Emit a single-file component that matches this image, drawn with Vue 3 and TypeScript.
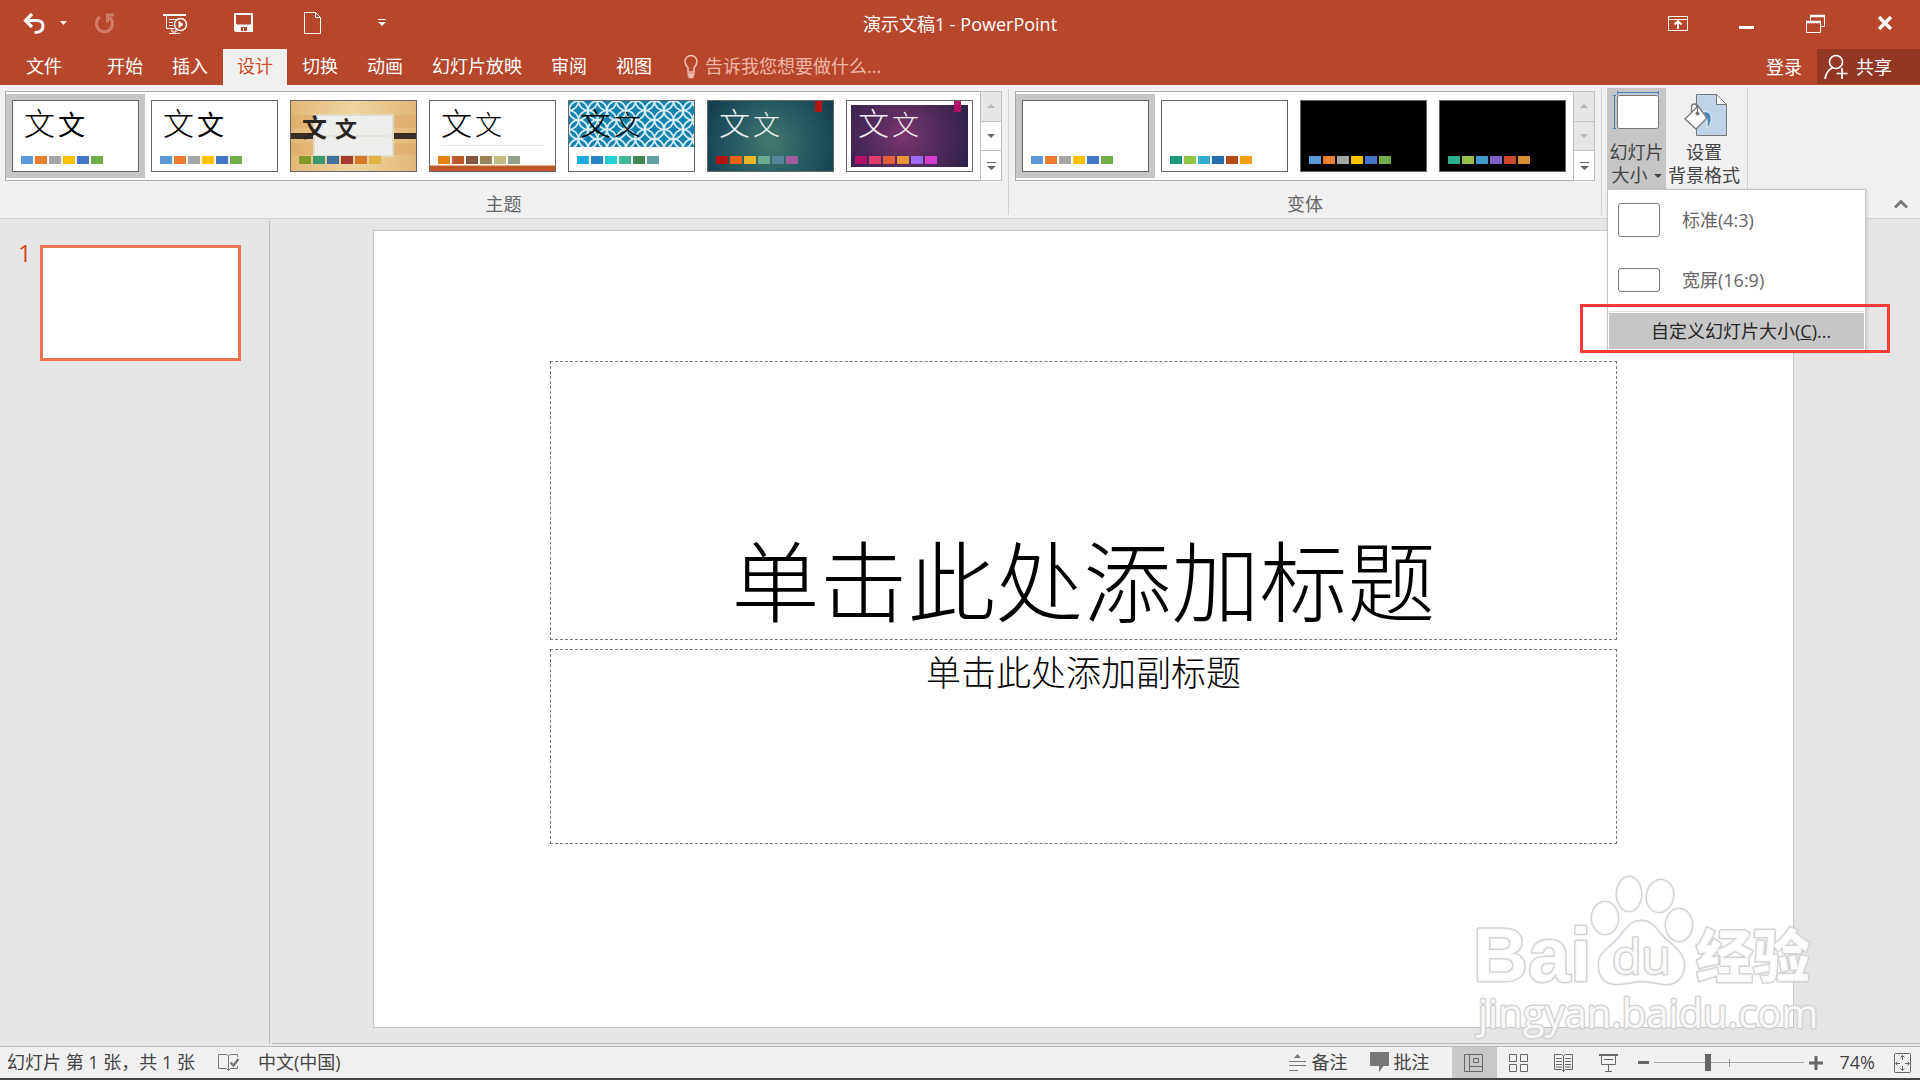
<script setup lang="ts">
import { ref } from 'vue'

interface Theme {
  name: string
  kind: string
  sample: boolean
  colors: string[]
}

const office = ['#5b9bd5', '#ed7d31', '#a5a5a5', '#ffc000', '#4472c4', '#70ad47']

const themes: Theme[] = [
  { name: 'Office 主题', kind: 'plain', sample: true, colors: office },
  { name: 'Office 主题 2', kind: 'plain', sample: true, colors: office },
  { name: '木材纹理', kind: 'wood', sample: true, colors: ['#83992a', '#3c9770', '#44709d', '#a23c33', '#d97828', '#deb340'] },
  { name: '回顾', kind: 'retro', sample: true, colors: ['#e48312', '#bd582c', '#865640', '#9b8357', '#c2bc80', '#94a088'] },
  { name: '积分', kind: 'rings', sample: true, colors: ['#1cade4', '#2683c6', '#27ced7', '#42ba97', '#3e8853', '#62a39f'] },
  { name: '离子', kind: 'ion', sample: true, colors: ['#b01513', '#ea6312', '#e6b729', '#6aac90', '#54849a', '#9e5e9b'] },
  { name: '离子会议室', kind: 'board', sample: true, colors: ['#b31166', '#e33d6f', '#e45f3c', '#e9943a', '#9b6bf2', '#d53dd0'] },
]

const variants: Theme[] = [
  { name: '变体 1', kind: 'plain', sample: false, colors: office },
  { name: '变体 2', kind: 'plain', sample: false, colors: ['#1b9b77', '#8cc541', '#36afce', '#1d6fa9', '#b64919', '#f39c16'] },
  { name: '变体 3', kind: 'black', sample: false, colors: office },
  { name: '变体 4', kind: 'black', sample: false, colors: ['#28b08d', '#97bf4b', '#3e9bcd', '#7e5cc5', '#cd472a', '#d98c2e'] },
]

const tabs = ['开始', '插入', '设计', '切换', '动画', '幻灯片放映', '审阅', '视图']
const activeTab = ref('设计')
const activeTheme = ref(0)
const activeVariant = ref(0)
const query = ref('')
const zoom = ref(36)
</script>

<template>
  <div class="app">
    <header class="titlebar">
      <div class="quick">
        <button class="undo" aria-label="撤消">
          <svg width="46" height="24" viewBox="0 0 46 24"><path d="M3 9.500H14.500Q21 9.500 21 15Q21 21.500 12.500 21.500" fill="none" stroke="#f4f4f4" stroke-width="3" /><path d="M10 3L3.500 9.500L10 16" fill="none" stroke="#f4f4f4" stroke-width="3.200" /><path d="M38 10h7l-3.500 4z" fill="#f4f4f4" /></svg>
        </button>
        <button class="redo" aria-label="重复" disabled>
          <svg width="22" height="24" viewBox="0 0 22 24"><path d="M6 6A8 8 0 1 0 15.500 6.500M20 4h-6.500v7.500" fill="none" stroke="#cf7d69" stroke-width="3" /></svg>
        </button>
        <button class="show" aria-label="从头开始">
          <svg width="26" height="24" viewBox="0 0 26 24" fill="none" stroke="#fff"><path d="M1 4h23" stroke-width="2" /><path d="M4.500 5v12.500h8M7 8.500h7M7 11.500h4M7 14.500h4M10 18v3h4v-3M7 22.500h11" /><circle cx="18.500" cy="13.500" r="6" stroke-width="1.500" /><path d="M17 10.500l4 3l-4 3z" fill="#fff" /></svg>
        </button>
        <button class="save" aria-label="保存">
          <svg width="20" height="22" viewBox="0 0 20 22"><path fill="#f6f6f6" fill-rule="evenodd" d="M0 1h19v19H1.500L0 18.500zM2 3v8.500l1 1h13l1-1V3zM5 15v4h2v-4zm0 0h8v4h-3v-3H9v3H5z" /></svg>
        </button>
        <button class="new" aria-label="新建">
          <svg width="18" height="24" viewBox="0 0 18 24" fill="none" stroke="#fff"><path d="M.5 1.500h11l5 5v16H.5z" /><path d="M11.500 1.500v5h5" /></svg>
        </button>
        <button aria-label="自定义快速访问工具栏">
          <svg width="8" height="10" viewBox="0 0 8 10"><path d="M0 1h8v1H0zM0 4h8L4 8z" fill="#fff" /></svg>
        </button>
      </div>
      <h1 class="doc">演示文稿1 - PowerPoint</h1>
      <div class="window">
        <button aria-label="功能区显示选项">
          <svg width="20" height="20" viewBox="0 0 20 20" fill="none" stroke="#fff"><path d="M.5 2.500h19v14H.5zM.5 5.500h19" /><path d="M10 15V7.500M6.500 10.500L10 7l3.500 3.500" stroke-width="1.800" /></svg>
        </button>
        <button aria-label="最小化"><svg width="16" height="20" viewBox="0 0 16 20"><path d="M0 12h15v3H0z" fill="#fff" /></svg></button>
        <button aria-label="向下还原">
          <svg width="20" height="20" viewBox="0 0 20 20" fill="none" stroke="#fff"><path d="M4.500 7V1.500h14v11H15M.5 7.500h14v11H.5z" /><path d="M4 2h15M0 8h15" stroke-width="2.500" /></svg>
        </button>
        <button aria-label="关闭"><svg width="16" height="20" viewBox="0 0 16 20"><path d="M2 3l12 12M14 3L2 15" stroke="#fff" stroke-width="3.500" /></svg></button>
      </div>
    </header>

    <nav class="tabs" aria-label="功能区">
      <button class="tab file">文件</button>
      <button v-for="t in tabs" :key="t" class="tab" :class="{ active: t === activeTab }" @click="activeTab = t">{{ t }}</button>
      <label class="tell">
        <svg width="16" height="28" viewBox="0 0 16 28" fill="none" stroke="#eec0b3" stroke-width="1.600"><path d="M5 19v-4Q2 11.500 2 8.500a6 6 0 0 1 12 0Q14 11.500 11 15v4z" /><path d="M4.500 21.500h7M5.500 24h5" stroke-width="2.400" /></svg>
        <input v-model="query" type="text" placeholder="告诉我您想要做什么..." aria-label="告诉我您想要做什么">
      </label>
      <button class="login">登录</button>
      <button class="share">
        <svg width="24" height="26" viewBox="0 0 24 26" fill="none" stroke="#fff" stroke-width="1.700"><circle cx="12" cy="8" r="6.500" /><path d="M1 25Q2.500 16 8.500 14M18 14v11M12.500 19.500h11" /></svg>
        共享
      </button>
    </nav>

    <section class="ribbon" aria-label="设计">
      <svg class="defs" width="0" height="0" aria-hidden="true">
        <defs>
          <pattern id="rings" width="19" height="19" patternUnits="userSpaceOnUse">
            <rect width="19" height="19" fill="#1482b0" />
            <g fill="none" stroke="#d9eef5" stroke-width="1.700"><circle cx="9.500" cy="9.500" r="9.500" /><circle r="9.500" /><circle cx="19" r="9.500" /><circle cy="19" r="9.500" /><circle cx="19" cy="19" r="9.500" /></g>
          </pattern>
        </defs>
      </svg>

      <div class="group">
        <div class="gallery">
          <button v-for="(t, i) in themes" :key="t.name" class="cell" :class="{ chosen: i === activeTheme }" :aria-label="t.name" @click="activeTheme = i">
            <span class="thumb" :class="t.kind">
              <svg v-if="t.kind === 'rings'" class="art" viewBox="0 0 125 70"><rect width="125" height="46" fill="url(#rings)" /></svg>
              <svg v-else-if="t.kind === 'wood'" class="art" viewBox="0 0 125 70"><path d="M0 14h125v13H0zM0 42h125v12H0z" fill="#dd9d58" opacity=".35" /><path d="M0 32h125v6H0z" fill="#3a2d24" /><path d="M23 14h79v41H23z" fill="#eeeeec" stroke="#dcdcc8" stroke-width="2" /><path d="M24 35h74" stroke="#dcdccb" /></svg>
              <svg v-else-if="t.kind === 'retro'" class="art" viewBox="0 0 125 70"><path d="M11 44.500h103" stroke="#e8e8e8" /><path d="M0 65h125v5H0z" fill="#bd582c" /><path d="M0 64.500h125" stroke="#edb37f" /></svg>
              <svg v-else-if="t.kind === 'ion' || t.kind === 'board'" class="art" viewBox="0 0 125 70"><path d="M107 0h7v11h-7z" :fill="t.colors[0]" /></svg>
              <span class="sample"><span class="major">文</span><span class="minor">文</span></span>
              <span class="swatches"><i v-for="c in t.colors" :key="c" :style="{ background: c }" /></span>
            </span>
          </button>
          <div class="scroll">
            <button disabled aria-label="上一行"><svg width="8" height="4"><path d="M0 4h8L4 0z" fill="#b5b5b5" /></svg></button>
            <button aria-label="下一行"><svg width="8" height="4"><path d="M0 0h8L4 4z" fill="#666" /></svg></button>
            <button aria-label="其他主题"><svg width="9" height="8"><path d="M0 0h9v1H0zM0 4h9L4.500 8z" fill="#666" /></svg></button>
          </div>
        </div>
        <div class="caption">主题</div>
      </div>

      <div class="group">
        <div class="gallery">
          <button v-for="(t, i) in variants" :key="t.name" class="cell" :class="{ chosen: i === activeVariant }" :aria-label="t.name" @click="activeVariant = i">
            <span class="thumb" :class="t.kind">
              <span class="swatches"><i v-for="c in t.colors" :key="c" :style="{ background: c }" /></span>
            </span>
          </button>
          <div class="scroll">
            <button disabled aria-label="上一行"><svg width="8" height="4"><path d="M0 4h8L4 0z" fill="#b5b5b5" /></svg></button>
            <button disabled aria-label="下一行"><svg width="8" height="4"><path d="M0 0h8L4 4z" fill="#b5b5b5" /></svg></button>
            <button aria-label="其他变体"><svg width="9" height="8"><path d="M0 0h9v1H0zM0 4h9L4.500 8z" fill="#666" /></svg></button>
          </div>
        </div>
        <div class="caption">变体</div>
      </div>

      <div class="tools">
        <div class="size">
          <button class="tool open" aria-haspopup="menu" aria-expanded="true">
            <svg width="50" height="50" viewBox="0 0 50 50" fill="none"><rect x="5.500" y="4.500" width="41" height="33" rx="2" fill="#fff" stroke="#777" /><path d="M5 1.500h42M5.500 0v4M46.500 0v4M2.500 4v34M1 4.500h3M1 37.500h3" stroke="#4682be" /></svg>
            <span>幻灯片</span>
            <span>大小<svg width="8" height="4"><path d="M0 0h8L4 4z" fill="#444" /></svg></span>
          </button>
          <div class="menu" role="menu">
            <button class="item" role="menuitem"><span class="shape standard" />标准(4:3)</button>
            <button class="item" role="menuitem"><span class="shape wide" />宽屏(16:9)</button>
            <div class="divider" />
            <button class="item custom" role="menuitem">自定义幻灯片大小(<u>C</u>)...</button>
            <div class="highlight" />
          </div>
        </div>
        <button class="tool">
          <svg width="50" height="50" viewBox="0 0 50 50"><path d="M17.500 3.500h20l10 10v31h-30z" fill="#c1d3e8" stroke="#777" /><path d="M37.500 3.500v10h10z" fill="#fff" stroke="#777" /><path d="M24 21Q33 19 32 30Q31 35 28 37Q29 29 27 26z" fill="#4682be" stroke="#fff" stroke-width=".8" /><path d="M6 28L19 15L28 27L17 38z" fill="#fff" stroke="#777" stroke-width="1.300" /><path d="M12.500 22v-6q0-3 3-3t3 3v6" fill="none" stroke="#777" stroke-width="1.300" /><circle cx="18.500" cy="22.500" r="2" fill="#777" /></svg>
          <span>设置</span>
          <span>背景格式</span>
        </button>
      </div>
      <button class="collapse" aria-label="折叠功能区"><svg width="14" height="10" viewBox="0 0 14 10"><path d="M1 8.500L7 2.500l6 6" fill="none" stroke="#777" stroke-width="3" /></svg></button>
    </section>

    <main class="work">
      <aside class="slides">
        <span class="num">1</span>
        <button class="preview" aria-label="幻灯片 1" />
      </aside>
      <div class="stage">
        <article class="slide">
          <div class="holder title">单击此处添加标题</div>
          <div class="holder sub">单击此处添加副标题</div>
        </article>
        <svg class="watermark" width="352" height="180" viewBox="0 0 352 180" aria-hidden="true">
          <g fill="#fff" fill-opacity=".85" stroke="#d4d4d4" stroke-width="3" paint-order="stroke" stroke-linejoin="round">
            <text class="wm-brand" x="3" y="111">Bai</text>
            <ellipse cx="135" cy="48" rx="13" ry="16" />
            <ellipse cx="159" cy="24" rx="12" ry="17" />
            <ellipse cx="190" cy="26" rx="13" ry="16" transform="rotate(12 190 26)" />
            <ellipse cx="209" cy="55" rx="13" ry="16" />
            <path d="M171 51C183 51 186 60 194 68C204 77 215 84 214 97C213 108 205 115 194 114C183 112 178 111 171 111C163 111 158 114 145 114C134 113 129 106 129 95C129 82 139 79 148 69C156 60 160 51 171 51Z" />
            <text class="wm-du" x="142" y="104">du</text>
            <text class="wm-cn" x="226" y="107">经验</text>
            <text class="wm-url" x="8" y="158">jingyan.baidu.com</text>
          </g>
        </svg>
      </div>
    </main>

    <footer class="status">
      <span>幻灯片 第 1 张，共 1 张</span>
      <button class="spell" aria-label="拼写检查">
        <svg width="22" height="20" viewBox="0 0 22 20" fill="none" stroke="#777"><path d="M10.500 18.500L8.500 16.500H.5v-14H8.500L10.500 4V18.500L12.500 16.500H19.500V14M10.500 4L12.500 2.500H19.500V5" /><path d="M12.500 10.500l3 3L20.500 7" stroke-width="2.400" /></svg>
      </button>
      <span>中文(中国)</span>
      <div class="right">
        <button class="pane notes"><svg width="18" height="20" viewBox="0 0 18 20"><path d="M5 6h7L8.500 2z" fill="#777" /><path d="M0 9.500h17M0 13.500h17M0 18.500h9" stroke="#777" /></svg>备注</button>
        <button class="pane"><svg width="19" height="20" viewBox="0 0 19 20"><path d="M0 0h19v14H13.500L9 20V14H0z" fill="#777" /></svg>批注</button>
        <div class="views">
          <button class="on" aria-label="普通视图"><svg width="20" height="20" viewBox="0 0 20 20" fill="none" stroke="#666"><path d="M.5 1.500h18v17H.5zM5.500 1.500v17M5.500 13.500h13M9.500 5.500h5v4h-5z" /></svg></button>
          <button aria-label="幻灯片浏览"><svg width="20" height="20" viewBox="0 0 20 20" fill="none" stroke="#666"><path d="M.5 1.500h7v7h-7zM11.500 1.500h7v7h-7zM.5 11.500h7v7h-7zM11.500 11.500h7v7h-7z" /></svg></button>
          <button aria-label="阅读视图"><svg width="20" height="20" viewBox="0 0 20 20" fill="none" stroke="#666"><path d="M9.500 3v16M9.500 3L7.500 1.500H.5v15h7l2 1.500l2-1.500h7v-15h-7zM2 5.500h6M2 8.500h6M2 11.500h6M2 14h6M11 5.500h6M11 8.500h6M11 11.500h6M11 14h6" /></svg></button>
          <button aria-label="幻灯片放映"><svg width="20" height="20" viewBox="0 0 20 20" fill="none" stroke="#666"><path d="M0 2h19" stroke-width="2" /><path d="M2.500 3v8.500h14V3M5 6.500h9M9.500 11.500v7M6 18.500h7" /></svg></button>
        </div>
        <button class="step" aria-label="缩小"><svg width="12" height="14"><path d="M0 5h11v3H0z" fill="#666" /></svg></button>
        <input v-model.number="zoom" class="range" type="range" min="0" max="100" aria-label="显示比例">
        <button class="step plus" aria-label="放大"><svg width="14" height="14"><path d="M0 5.500h5.500V0h3v5.500H14v3H8.500V14h-3V8.500H0z" fill="#666" /></svg></button>
        <button class="percent">74%</button>
        <button class="fit" aria-label="使幻灯片适应当前窗口"><svg width="18" height="22" viewBox="0 0 18 22" fill="none" stroke="#666"><rect x=".5" y="1.500" width="16" height="19" rx="1" /><path d="M8.500 3v5M6.500 5.500l2-2l2 2M8.500 19v-5M6.500 16.500l2 2l2-2M2 11.500h4M3.500 9.500l-2 2l2 2M15 11.500h-4M13.500 9.500l2 2l-2 2" /></svg></button>
      </div>
    </footer>
  </div>
</template>

<style>
body {
  background: #e6e6e6;
}
</style>

<style scoped>
.app {
  box-sizing: border-box;
  display: flex;
  flex-direction: column;
  min-height: 100vh;
  border-bottom: 2px solid #444;
  background: #e6e6e6;
  color: #444;
  font: 18px/24px "Open Sans", "Noto Sans CJK SC", sans-serif;
}
button {
  padding: 0;
  border: 0;
  background: none;
  color: inherit;
  font: inherit;
}
svg {
  display: block;
  flex: none;
}

.titlebar {
  display: grid;
  grid-template-columns: 1fr auto 1fr;
  align-items: center;
  height: 49px;
  padding-bottom: 2px;
  box-sizing: border-box;
  background: #b7472a;
  color: #fff;
}
.quick {
  display: flex;
  align-items: center;
  padding: 0 0 2px 22px;
}
.undo { margin-right: 26px; }
.redo { margin-right: 46px; }
.show { margin-right: 46px; }
.save { margin-right: 50px; }
.new { margin-right: 56px; }
.doc {
  margin: 0;
  font-size: 18px;
  font-weight: 400;
}
.window {
  display: flex;
  justify-content: flex-end;
  gap: 51px;
  padding-right: 27px;
}

.tabs {
  display: flex;
  gap: 1px;
  height: 36px;
  background: #b7472a;
  color: #fff;
}
.tab {
  padding: 0 14px 2px;
}
.file {
  padding: 0 30px 2px 26px;
}
.active {
  background: #f1f1f1;
  color: #d24726;
}
.tell {
  display: flex;
  flex: 1;
  align-items: center;
  gap: 6px;
  padding-left: 16px;
}
.tell input {
  flex: 1;
  min-width: 0;
  padding: 0 0 2px;
  border: 0;
  outline: 0;
  background: none;
  color: #fff;
  font: inherit;
}
.tell input::placeholder {
  color: #eeb8a8;
  opacity: 1;
}
.login {
  margin-right: 14px;
}
.share {
  display: flex;
  align-items: center;
  gap: 8px;
  height: 35px;
  padding: 0 28px 0 7px;
  background: #923822;
}

.ribbon {
  display: flex;
  height: 133px;
  border-bottom: 1px solid #d2d2d2;
  background: #f1f1f1;
}
.defs {
  position: absolute;
}
.group {
  display: flex;
  flex-direction: column;
  margin: 4px 0 3px;
  padding: 2px 6px 0 5px;
  border-right: 1px solid #d2d2d2;
}
.group + .group {
  padding-left: 6px;
}
.gallery {
  display: flex;
  flex: none;
  box-sizing: border-box;
  height: 90px;
  border: 1px solid #ababab;
  border-right: 0;
  background: #fff;
}
.cell {
  width: 139px;
  height: 84px;
  margin-top: 2px;
  padding: 6px;
}
.chosen {
  background: #c6c6c6;
}
.thumb {
  position: relative;
  display: flex;
  flex-direction: column;
  justify-content: flex-end;
  box-sizing: border-box;
  height: 72px;
  padding: 0 8px 7px;
  border: 1px solid #666;
  background: #fff;
  color: #000;
}
.art {
  position: absolute;
  inset: 0;
  width: 100%;
  height: 100%;
}
.wood {
  background: linear-gradient(90deg, #e2b878, #efd5a2 50%, #e2b878);
}
.ion {
  background: radial-gradient(circle at 50% 60%, #42796b, #245862 55%, #123a4a);
  color: #eee;
}
.board {
  background: radial-gradient(circle at 45% 50%, #7d376c, #512a5c 45%, #27204a);
  box-shadow: inset 0 0 0 4px #fff;
  color: #eee;
}
.black {
  background: #000;
}
.sample {
  position: relative;
  display: flex;
  align-items: baseline;
  gap: 3px;
  height: 51px;
  margin-left: 3px;
  font-family: "Noto Sans CJK SC", sans-serif;
  line-height: 34px;
}
.major {
  font-size: 31px;
  font-weight: 300;
}
.minor {
  font-size: 27px;
}
.wood .sample {
  gap: 8px;
  color: #2a2622;
  line-height: 42px;
}
.wood .major {
  font-size: 25px;
  font-weight: 700;
}
.wood .minor {
  font-size: 22px;
  font-weight: 700;
}
.retro .minor,
.rings .minor,
.ion .minor,
.board .minor {
  font-weight: 300;
}
.swatches {
  position: relative;
  display: flex;
  gap: 2px;
}
.swatches i {
  width: 12px;
  height: 8px;
}
.scroll {
  display: flex;
  flex-direction: column;
  width: 22px;
  margin: -1px 0 -1px 1px;
  box-sizing: border-box;
  border: 1px solid #c0c0c0;
}
.scroll button {
  display: flex;
  flex: 1;
  align-items: center;
  justify-content: center;
}
.scroll button + button {
  border-top: 1px solid #c0c0c0;
}
.scroll button:disabled {
  background: #e6e6e6;
}
.caption {
  margin-top: 13px;
  color: #666;
  line-height: 20px;
  text-align: center;
}
.tools {
  display: flex;
  height: 101px;
  margin-top: 3px;
  padding-left: 5px;
  border-right: 1px solid #d2d2d2;
}
.size {
  position: relative;
  width: 59px;
}
.tool {
  display: flex;
  flex-direction: column;
  align-items: center;
  height: 101px;
  padding: 3px 2px 0;
  line-height: 23px;
  white-space: nowrap;
}
.size .tool {
  width: 59px;
}
.tool > span {
  display: flex;
  align-items: center;
  gap: 6px;
}
.size + .tool {
  width: 81px;
  padding-right: 7px;
}
.open {
  background: #c6c6c6;
}
.menu {
  position: absolute;
  z-index: 2;
  top: 101px;
  left: 0;
  box-sizing: border-box;
  width: 259px;
  padding: 0 1px 1px;
  border: 1px solid #c6c6c6;
  background: #fff;
  box-shadow: 1px 1px 4px rgb(0 0 0 / 15%);
}
.item {
  display: flex;
  align-items: center;
  width: 100%;
  height: 60px;
  gap: 22px;
  padding-left: 9px;
  color: #666;
}
.shape {
  box-sizing: border-box;
  width: 42px;
  border: 1px solid #777;
  border-radius: 3px;
}
.standard {
  height: 34px;
}
.wide {
  height: 24px;
}
.divider {
  height: 1px;
  margin: 1px 0;
  background: #e1e1e1;
}
.custom {
  gap: 0;
  height: 36px;
  padding-left: 42px;
  background: #c6c6c6;
  color: #262626;
}
.highlight {
  position: absolute;
  top: 114px;
  right: -25px;
  bottom: -3px;
  left: -28px;
  border: 3px solid #ff3838;
  pointer-events: none;
}
.collapse {
  align-self: flex-end;
  margin: 0 12px 9px auto;
}

.work {
  display: flex;
  flex: 1;
  border-bottom: 1px solid #bababa;
}
.slides {
  display: flex;
  align-items: flex-start;
  gap: 12px;
  box-sizing: border-box;
  width: 270px;
  margin: 2px 0;
  padding: 24px 28px 0 18px;
  border-right: 1px solid #bababa;
}
.num {
  width: 10px;
  color: #d24726;
  font-size: 24px;
  line-height: 16px;
}
.preview {
  box-sizing: border-box;
  flex: 1;
  height: 116px;
  border: 3px solid #ee7355;
  background: #fff;
}
.stage {
  position: relative;
  display: flex;
  flex: 1;
  margin: 0 0 2px 2px;
  padding: 11px 126px 15px 101px;
  border-bottom: 1px solid #bababa;
}
.slide {
  display: flex;
  flex: 1;
  flex-direction: column;
  gap: 9px;
  padding: 130px 12.4% 183px;
  border: 1px solid #c6c6c6;
  background: #fff;
  color: #000;
  text-align: center;
}
.holder {
  box-sizing: border-box;
  border: 1px dashed #777;
  font-family: "Noto Sans CJK SC", sans-serif;
  font-weight: 300;
}
.title {
  display: flex;
  flex: 279;
  align-items: flex-end;
  justify-content: center;
  font-size: 88px;
  line-height: 124px;
}
.sub {
  flex: 195;
  font-size: 35px;
  line-height: 42px;
}
.watermark {
  position: absolute;
  right: 98px;
  bottom: -7px;
  pointer-events: none;
}
.wm-brand {
  font: 700 76px "Liberation Sans", sans-serif;
}
.wm-du {
  font: 400 48px "Open Sans", sans-serif;
}
.wm-cn {
  font: 900 57px "Noto Sans CJK SC", sans-serif;
}
.wm-url {
  font: 400 40px "Open Sans", sans-serif;
}

.status {
  display: flex;
  align-items: center;
  box-sizing: border-box;
  height: 31px;
  padding: 0 0 2px 7px;
  background: #f1f1f1;
}
.spell {
  margin: 0 18px 0 23px;
}
.right {
  display: flex;
  align-items: center;
  height: 31px;
  margin: 0 0 -2px auto;
  padding-right: 8px;
}
.pane {
  display: flex;
  align-items: center;
  gap: 5px;
  height: 29px;
  margin: 0 22px 2px 0;
}
.views {
  display: flex;
  height: 31px;
}
.views button {
  display: flex;
  align-items: center;
  justify-content: center;
  width: 45px;
}
.on {
  background: #c8c8c8;
}
.step {
  margin: 0 4px 0 6px;
}
.plus {
  margin: 0 17px 0 5px;
}
.range {
  width: 150px;
  height: 18px;
  margin: 0;
  appearance: none;
  background:
    linear-gradient(#999, #999) 75px center / 1px 8px no-repeat,
    linear-gradient(#aaa, #aaa) center / 100% 1px no-repeat;
}
.range::-webkit-slider-thumb {
  width: 6px;
  height: 17px;
  appearance: none;
  background: #666;
}
.percent {
  margin: 0 19px 2px 0;
}
</style>
